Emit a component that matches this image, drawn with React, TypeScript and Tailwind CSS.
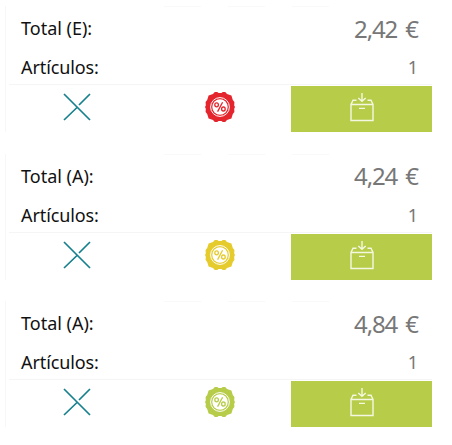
type Ticket = {
  id: number;
  label: string;
  total: string;
  items: number;
  badge: string;
};

const tickets: Ticket[] = [
  { id: 1, label: "Total (E):", total: "2,42 €", items: 1, badge: "text-[#e5252d]" },
  { id: 2, label: "Total (A):", total: "4,24 €", items: 1, badge: "text-[#e5cb2c]" },
  { id: 3, label: "Total (A):", total: "4,84 €", items: 1, badge: "text-[#b7cc49]" },
];

function CloseIcon() {
  return (
    <svg width="28" height="28" viewBox="0 0 28 28" fill="none" stroke="#16808e" strokeWidth="1.7">
      <path d="M1 1 27 27M1 27 14 14.5M16 12 27 1" />
    </svg>
  );
}

function DiscountIcon() {
  return (
    <svg width="32" height="32" viewBox="0 0 32 32" fill="none">
      <path
        fill="currentColor"
        d="M10.8 1 13.2 1 14.6 2H17.4L18.8 1 21.2 1 23 3 27.4 4.4 28.8 9 30.4 11 30.2 14.4 31 16 30.2 17.8 30.4 21 28.8 23 27.4 27.6 23 29 21.2 31 18.8 31 17.4 30H14.6L13.2 31 10.8 31 9 29 4.6 27.6 3.2 23 1.6 21 1.8 17.8 1 16 1.8 14.4 1.6 11 3.2 9 4.6 4.4 9 3Z"
      />
      <circle cx="16" cy="16" r="9.4" stroke="white" strokeWidth="1" />
      <circle cx="16" cy="16" r="7.7" fill="white" />
      <g stroke="currentColor" strokeWidth="1.3">
        <ellipse cx="12.6" cy="13.8" rx="1.8" ry="2" />
        <ellipse cx="19.4" cy="18" rx="1.8" ry="2" />
        <path d="M18.6 11.3 13.6 20.6" />
      </g>
    </svg>
  );
}

function BoxIcon() {
  return (
    <svg width="24" height="30" viewBox="0 0 24 30" fill="none" stroke="#f4f8e3" strokeWidth="1.4">
      <path d="M1 12.5V28.5H23V12.5ZM1 12.5 3 8.3H6.5M23 12.5 21 8.3H17.5M9 16.4H15" />
      <path d="M12 1V9M8.3 6 12 9.3 15.7 6" />
    </svg>
  );
}

function TicketCard({ ticket }: { ticket: Ticket }) {
  return (
    <section className="h-[126px] w-[427px] border-l border-[#f7f7f7]">
      <div className="flex h-px gap-[27px] pl-[158px]">
        <span className="w-[37px] bg-[#f9f9f9]" />
        <span className="w-[37px] bg-[#f9f9f9]" />
        <span className="w-[37px] bg-[#f9f9f9]" />
      </div>
      <div className="flex h-[43px] items-center justify-between pr-[14px] pl-[15px]">
        <span className="text-[18px] text-[#111]">{ticket.label}</span>
        <span className="text-[24px] tracking-[-1.1px] text-[#777] [word-spacing:3px]">{ticket.total}</span>
      </div>
      <div className="flex h-[34px] items-center justify-between pt-px pr-[14px] pl-[15px]">
        <span className="text-[18px] tracking-[-0.1px] text-[#111]">Artículos:</span>
        <span className="text-[18px] text-[#777]">{ticket.items}</span>
      </div>
      <div className="ml-[3px] h-0.5 border-t border-[#f5f5f5]" />
      <div className="grid h-[46px] grid-cols-[142px_143px_141px]">
        <button className="flex items-center justify-center pb-1">
          <CloseIcon />
        </button>
        <button className={`flex items-center justify-center pb-1 ${ticket.badge}`}>
          <DiscountIcon />
        </button>
        <button className="flex items-center justify-center bg-[#b7cc49] pb-1">
          <BoxIcon />
        </button>
      </div>
    </section>
  );
}

export default function App() {
  return (
    <main className="flex h-[445px] w-[452px] flex-col bg-white pt-[6px] pl-[5px] font-['Noto_Sans','Open_Sans',sans-serif]">
      <div className="flex flex-col gap-[21.5px]">
        {tickets.map((ticket) => (
          <TicketCard key={ticket.id} ticket={ticket} />
        ))}
      </div>
    </main>
  );
}
